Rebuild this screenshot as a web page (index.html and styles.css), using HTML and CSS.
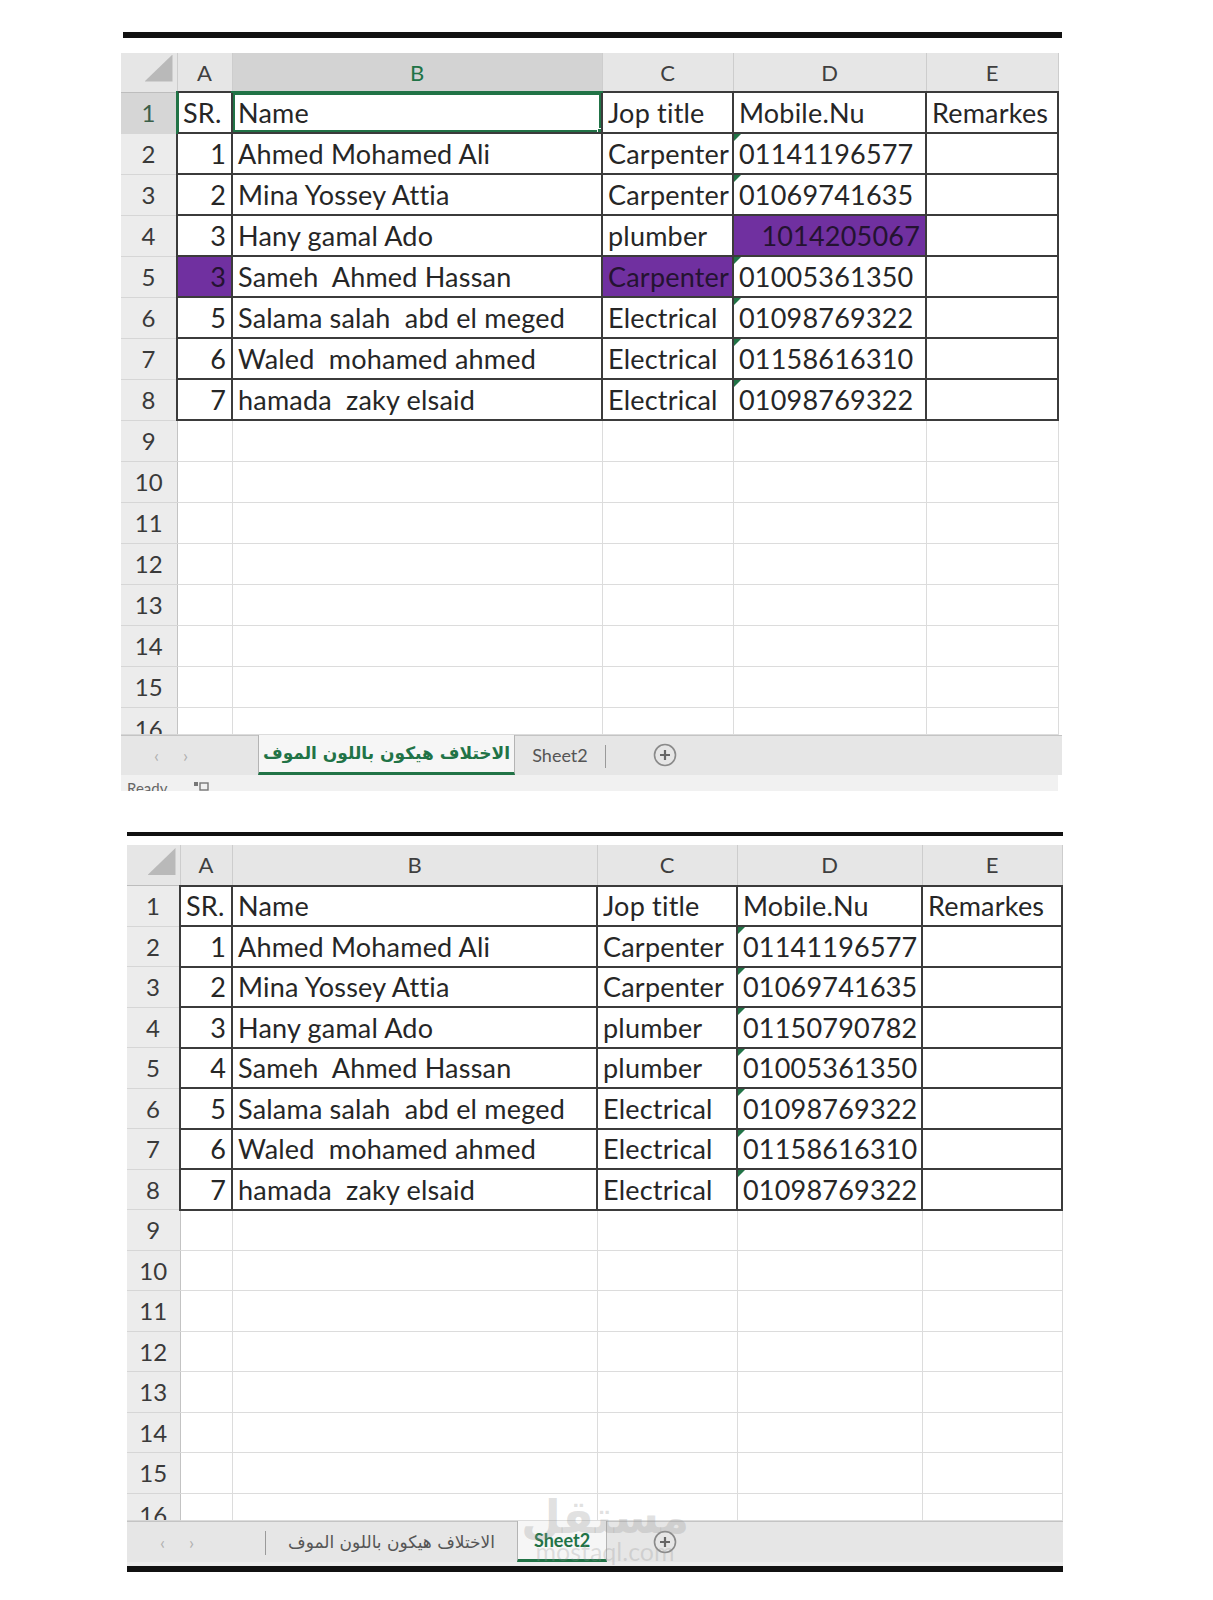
FILE: index.html
```html
<!DOCTYPE html>
<html lang="en">
<head>
    <meta charset="UTF-8">
    <title>Workers list</title>
    <link rel="stylesheet" href="styles.css">
</head>
<body>
<div class="page">

    <!-- first copy: the changed cells are filled purple -->
    <section class="sheet one">
        <div class="frame-bar"></div>
        <table class="grid">
            <colgroup>
                <col class="c-row"><col class="c-a"><col class="c-b"><col class="c-c"><col class="c-d"><col class="c-e">
            </colgroup>
            <thead>
                <tr>
                    <th class="corner"><span class="corner-mark"></span></th>
                    <th>A</th><th class="sel">B</th><th>C</th><th>D</th><th>E</th>
                </tr>
            </thead>
            <tbody>
                <tr><th class="sel">1</th><td class="b pick">SR.</td><td class="b active">Name<span class="handle"></span></td><td class="b">Jop title</td><td class="b">Mobile.Nu</td><td class="b">Remarkes</td></tr>
                <tr><th>2</th><td class="b num">1</td><td class="b">Ahmed Mohamed Ali</td><td class="b">Carpenter</td><td class="b flag">01141196577</td><td class="b"></td></tr>
                <tr><th>3</th><td class="b num">2</td><td class="b">Mina Yossey Attia</td><td class="b">Carpenter</td><td class="b flag">01069741635</td><td class="b"></td></tr>
                <tr><th>4</th><td class="b num">3</td><td class="b">Hany gamal Ado</td><td class="b">plumber</td><td class="b num hl">1014205067</td><td class="b"></td></tr>
                <tr><th>5</th><td class="b num hl">3</td><td class="b">Sameh  Ahmed Hassan</td><td class="b hl">Carpenter</td><td class="b flag">01005361350</td><td class="b"></td></tr>
                <tr><th>6</th><td class="b num">5</td><td class="b">Salama salah  abd el meged</td><td class="b">Electrical</td><td class="b flag">01098769322</td><td class="b"></td></tr>
                <tr><th>7</th><td class="b num">6</td><td class="b">Waled  mohamed ahmed</td><td class="b">Electrical</td><td class="b flag">01158616310</td><td class="b"></td></tr>
                <tr><th>8</th><td class="b num">7</td><td class="b">hamada  zaky elsaid</td><td class="b">Electrical</td><td class="b flag">01098769322</td><td class="b"></td></tr>
                <tr><th>9</th><td></td><td></td><td></td><td></td><td></td></tr>
                <tr><th>10</th><td></td><td></td><td></td><td></td><td></td></tr>
                <tr><th>11</th><td></td><td></td><td></td><td></td><td></td></tr>
                <tr><th>12</th><td></td><td></td><td></td><td></td><td></td></tr>
                <tr><th>13</th><td></td><td></td><td></td><td></td><td></td></tr>
                <tr><th>14</th><td></td><td></td><td></td><td></td><td></td></tr>
                <tr><th>15</th><td></td><td></td><td></td><td></td><td></td></tr>
                <tr class="cut"><th><span class="clip">16</span></th><td></td><td></td><td></td><td></td><td></td></tr>
            </tbody>
        </table>
        <div class="tabs">
            <div class="nav"><span>&#8249;</span><span>&#8250;</span></div>
            <div class="tab on ar">الاختلاف هيكون باللون الموف</div>
            <div class="tab">Sheet2</div>
            <div class="sep"></div>
            <div class="add">
                <svg width="24" height="24" viewBox="0 0 24 24"><circle cx="12" cy="12" r="10.5" fill="none" stroke="#8a8a8a" stroke-width="1.6"/><path d="M12 7v10M7 12h10" stroke="#666" stroke-width="2.2"/></svg>
            </div>
        </div>
        <div class="status">
            <span class="ready">Ready</span>
            <svg class="macro" width="16" height="10" viewBox="0 0 16 10"><rect x="1" y="1" width="4" height="4" fill="#777"/><rect x="7" y="2" width="8" height="7" fill="none" stroke="#777" stroke-width="1.4"/></svg>
        </div>
    </section>

    <!-- second copy: the corrected sheet -->
    <section class="sheet two">
        <div class="frame-bar"></div>
        <table class="grid">
            <colgroup>
                <col class="c-row"><col class="c-a"><col class="c-b"><col class="c-c"><col class="c-d"><col class="c-e">
            </colgroup>
            <thead>
                <tr>
                    <th class="corner"><span class="corner-mark"></span></th>
                    <th>A</th><th>B</th><th>C</th><th>D</th><th>E</th>
                </tr>
            </thead>
            <tbody>
                <tr><th>1</th><td class="b">SR.</td><td class="b">Name</td><td class="b">Jop title</td><td class="b">Mobile.Nu</td><td class="b">Remarkes</td></tr>
                <tr><th>2</th><td class="b num">1</td><td class="b">Ahmed Mohamed Ali</td><td class="b">Carpenter</td><td class="b flag">01141196577</td><td class="b"></td></tr>
                <tr><th>3</th><td class="b num">2</td><td class="b">Mina Yossey Attia</td><td class="b">Carpenter</td><td class="b flag">01069741635</td><td class="b"></td></tr>
                <tr><th>4</th><td class="b num">3</td><td class="b">Hany gamal Ado</td><td class="b">plumber</td><td class="b flag">01150790782</td><td class="b"></td></tr>
                <tr><th>5</th><td class="b num">4</td><td class="b">Sameh  Ahmed Hassan</td><td class="b">plumber</td><td class="b flag">01005361350</td><td class="b"></td></tr>
                <tr><th>6</th><td class="b num">5</td><td class="b">Salama salah  abd el meged</td><td class="b">Electrical</td><td class="b flag">01098769322</td><td class="b"></td></tr>
                <tr><th>7</th><td class="b num">6</td><td class="b">Waled  mohamed ahmed</td><td class="b">Electrical</td><td class="b flag">01158616310</td><td class="b"></td></tr>
                <tr><th>8</th><td class="b num">7</td><td class="b">hamada  zaky elsaid</td><td class="b">Electrical</td><td class="b flag">01098769322</td><td class="b"></td></tr>
                <tr><th>9</th><td></td><td></td><td></td><td></td><td></td></tr>
                <tr><th>10</th><td></td><td></td><td></td><td></td><td></td></tr>
                <tr><th>11</th><td></td><td></td><td></td><td></td><td></td></tr>
                <tr><th>12</th><td></td><td></td><td></td><td></td><td></td></tr>
                <tr><th>13</th><td></td><td></td><td></td><td></td><td></td></tr>
                <tr><th>14</th><td></td><td></td><td></td><td></td><td></td></tr>
                <tr><th>15</th><td></td><td></td><td></td><td></td><td></td></tr>
                <tr class="cut"><th><span class="clip">16</span></th><td></td><td></td><td></td><td></td><td></td></tr>
            </tbody>
        </table>
        <div class="tabs">
            <div class="nav"><span>&#8249;</span><span>&#8250;</span></div>
            <div class="sep"></div>
            <div class="tab ar">الاختلاف هيكون باللون الموف</div>
            <div class="tab on">Sheet2</div>
            <div class="add">
                <svg width="24" height="24" viewBox="0 0 24 24"><circle cx="12" cy="12" r="10.5" fill="none" stroke="#8a8a8a" stroke-width="1.6"/><path d="M12 7v10M7 12h10" stroke="#666" stroke-width="2.2"/></svg>
            </div>
        </div>
        <div class="foot"></div>
        <div class="frame-bar bottom"></div>

        <div class="stamp">
            <span class="stamp-ar">مستقل</span>
            <span class="stamp-en">mostaql.com</span>
        </div>
    </section>

</div>
</body>
</html>
```

FILE: styles.css
```css
* {
    box-sizing: border-box;
    margin: 0;
    padding: 0;
}

body {
    background: #ffffff;
    font-family: Lato, "DejaVu Sans", sans-serif;
    color: #262626;
}

.page {
    padding-top: 32px;
}

.sheet {
    position: relative;
}

.one {
    margin-left: 121px;
    width: 941px;
}

.two {
    margin-left: 127px;
    width: 936px;
    margin-top: 41px;
}

/* thick black edge of the photo */
.frame-bar {
    background: #111;
}

.one .frame-bar {
    height: 6px;
    width: 939px;
    margin-left: 2px;
    margin-bottom: 15px;
}

.two .frame-bar {
    height: 4px;
    width: 936px;
    margin-bottom: 9px;
}

.two .frame-bar.bottom {
    height: 6px;
    margin-bottom: 0;
}

/* grid */
.grid {
    border-collapse: collapse;
    table-layout: fixed;
}

.one .grid { width: 937px; }
.two .grid { width: 935px; }

.one .c-row { width: 56px; }
.one .c-a { width: 55px; }
.one .c-b { width: 370px; }
.one .c-c { width: 131px; }
.one .c-d { width: 193px; }
.one .c-e { width: 132px; }

.two .c-row { width: 53px; }
.two .c-a { width: 52px; }
.two .c-b { width: 365px; }
.two .c-c { width: 140px; }
.two .c-d { width: 185px; }
.two .c-e { width: 140px; }

.one thead tr { height: 39px; }
.one tbody tr { height: 41px; }
.one tbody tr.cut { height: 26px; }

.two thead tr { height: 41px; }
.two tbody tr { height: 40.5px; }
.two tbody tr.cut { height: 25.5px; }

thead th {
    background: #e6e6e6;
    color: #3f3f3f;
    font-size: 22px;
    font-weight: 400;
    border-right: 1px solid #cdcdcd;
    border-bottom: 1px solid #bdbdbd;
}

thead th.sel {
    background: #d3d3d3;
    color: #217346;
    border-bottom: 2px solid #217346;
}

th.corner {
    text-align: right;
    vertical-align: bottom;
    padding: 0 4px 5px 0;
}

.corner-mark {
    display: inline-block;
    width: 28px;
    height: 27px;
    background: #b9b9b9;
    clip-path: polygon(100% 0, 100% 100%, 0 100%);
}

tbody th {
    background: #ececec;
    color: #3a3a3a;
    font-size: 24px;
    font-weight: 400;
    border-right: 1px solid #c3c3c3;
    border-bottom: 1px solid #d6d6d6;
    vertical-align: middle;
}

tbody th.sel {
    background: #d6d6d6;
    color: #3b5f49;
    border-right: 2px solid #217346;
}

tr.cut th {
    vertical-align: top;
}

.clip {
    display: block;
    height: 26px;
    line-height: 41px;
    overflow: hidden;
}

td {
    font-size: 27px;
    letter-spacing: 0.2px;
    line-height: 1;
    padding: 0 5px;
    white-space: pre;
    overflow: hidden;
    border: 1px solid #dcdcdc;
    vertical-align: middle;
}

td.b {
    border: 2px solid #3b3b3b;
}

td.num {
    text-align: right;
}

td.hl {
    background: #7030a0;
    color: #241331;
}

td.pick {
    box-shadow: inset 1px 0 0 #217346;
}

td.active {
    position: relative;
    box-shadow: inset 0 0 0 2px #217346;
}

.handle {
    position: absolute;
    right: -3px;
    bottom: -3px;
    width: 7px;
    height: 7px;
    background: #217346;
    border: 1px solid #fff;
}

/* little green corner on numbers stored as text */
td.flag {
    position: relative;
}

td.flag::before {
    content: "";
    position: absolute;
    left: 0;
    top: 0;
    border-top: 7px solid #217346;
    border-right: 7px solid transparent;
}

/* sheet tabs */
.tabs {
    display: flex;
    align-items: stretch;
    background: #e6e6e6;
    border-top: 1px solid #c4c4c4;
}

.one .tabs { height: 40px; }
.two .tabs { height: 41px; }

.nav {
    display: flex;
    align-items: center;
    gap: 24px;
    padding-left: 33px;
    color: #b0b0b0;
    font-size: 18px;
}

.one .nav { width: 137px; }
.two .nav { width: 138px; }

.tab {
    display: flex;
    align-items: center;
    justify-content: center;
    font-size: 18px;
    color: #555;
    width: 90px;
}

.tab.ar {
    font-family: "DejaVu Sans", sans-serif;
    font-size: 17px;
}

.one .tab.ar { width: 257px; }
.two .tab.ar { width: 251px; }

.tab.on {
    background: #f6f6f6;
    color: #217346;
    font-weight: 700;
    border-left: 1px solid #b4b4b4;
    border-right: 1px solid #b4b4b4;
    border-bottom: 3px solid #217346;
    margin-top: -1px;
}

.sep {
    width: 1px;
    background: #9a9a9a;
    margin: 9px 0 7px;
}

.add {
    display: flex;
    align-items: center;
    margin-left: 47px;
}

.two .add {
    margin-left: 46px;
}

/* status line, cut by the photo edge */
.status {
    height: 16px;
    width: 937px;
    overflow: hidden;
    background: #f1f1f1;
    display: flex;
    align-items: flex-start;
}

.ready {
    display: block;
    margin: 5px 0 0 6px;
    font-size: 15px;
    line-height: 16px;
    color: #666;
}

.macro {
    margin: 6px 0 0 26px;
}

.foot {
    height: 4px;
    background: #ececec;
}

/* site watermark over the tab bar */
.stamp {
    position: absolute;
    left: 404px;
    top: 660px;
    width: 148px;
    display: flex;
    flex-direction: column;
    align-items: center;
    color: rgba(150, 150, 150, 0.28);
    pointer-events: none;
}

.stamp-ar {
    font-family: "DejaVu Sans", sans-serif;
    font-weight: 700;
    font-size: 46px;
    line-height: 50px;
}

.stamp-en {
    font-size: 25px;
    line-height: 22px;
    margin-top: -2px;
}
```
